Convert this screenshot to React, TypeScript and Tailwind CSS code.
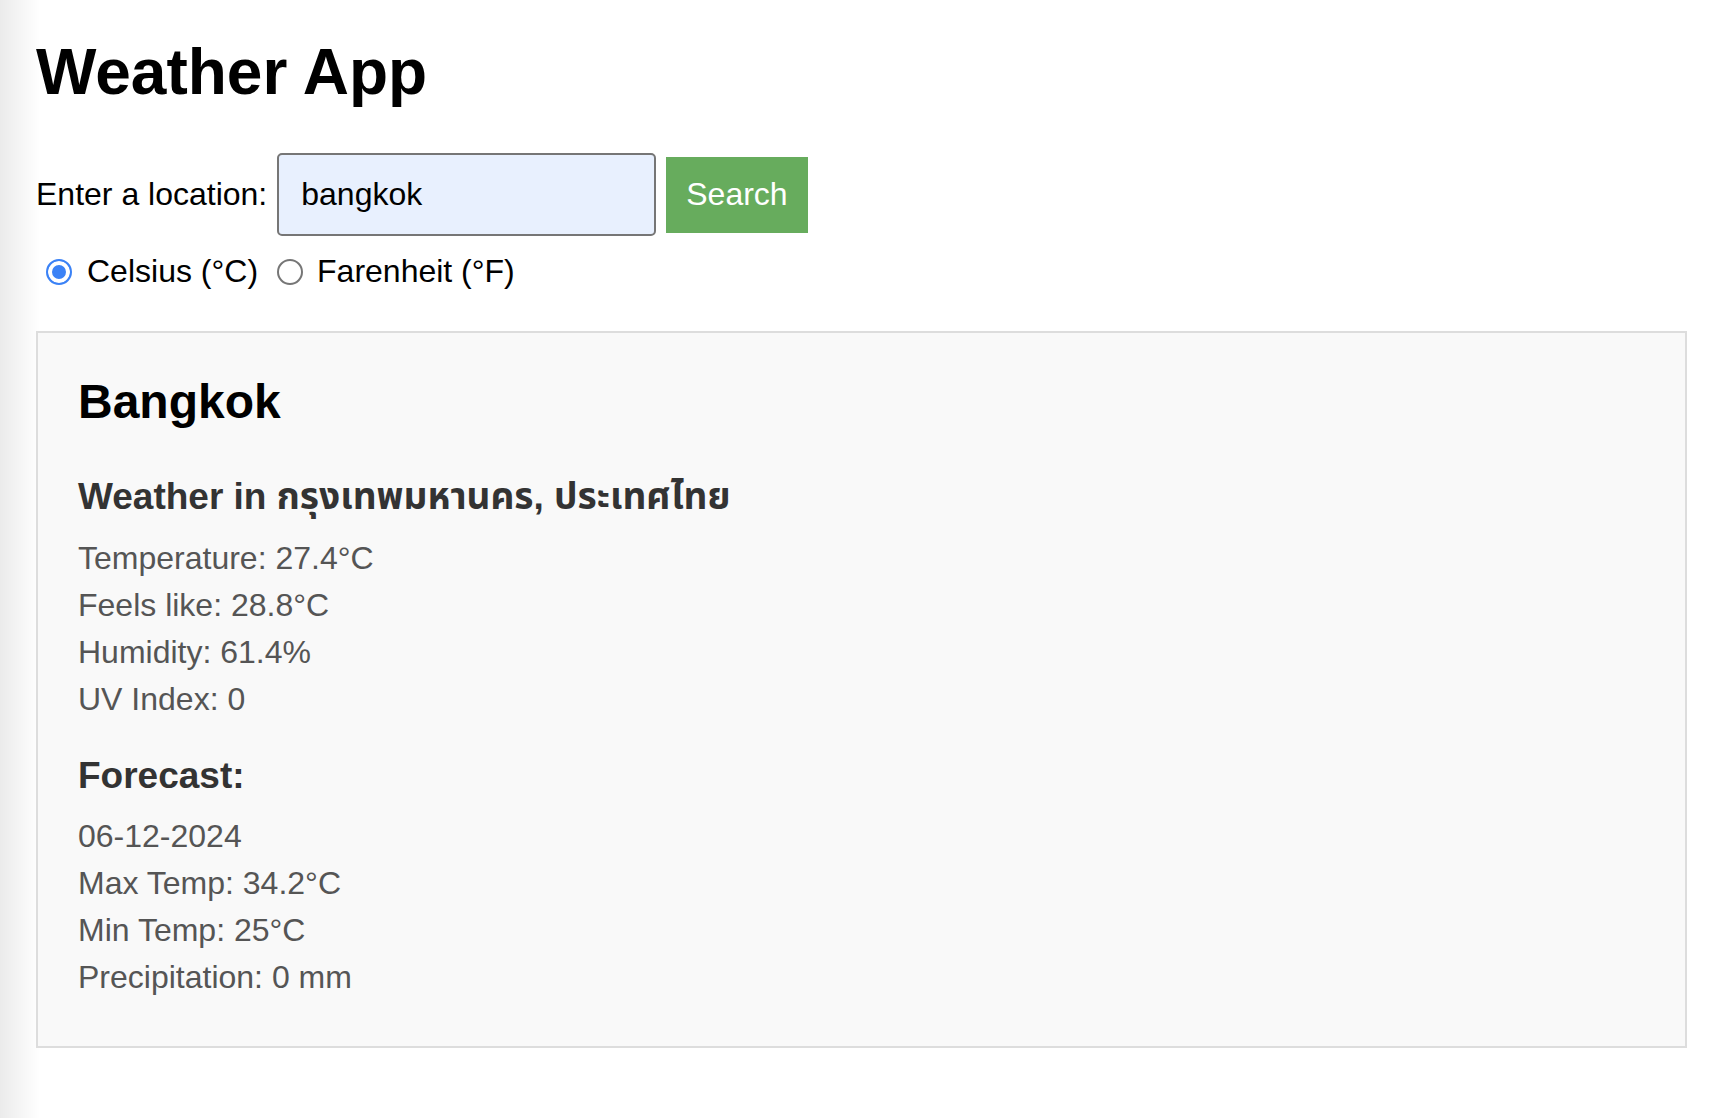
import { useState } from 'react';

const current = [
  'Temperature: 27.4°C',
  'Feels like: 28.8°C',
  'Humidity: 61.4%',
  'UV Index: 0',
];

const forecast = [
  '06-12-2024',
  'Max Temp: 34.2°C',
  'Min Temp: 25°C',
  'Precipitation: 0 mm',
];

export default function App() {
  const [location, setLocation] = useState('bangkok');
  const [unit, setUnit] = useState<'c' | 'f'>('c');

  return (
    <div className="min-h-screen bg-[linear-gradient(to_right,#ebebeb,#ffffff_40px)] font-['Liberation_Sans','Noto_Sans_Thai','Noto_Sans',sans-serif] text-black">
      <div className="pl-[36px] pr-[41px] pt-[35px]">
        <h1 className="text-[64px] leading-[74px] font-bold">Weather App</h1>

        {/* Search */}
        <form className="mt-[44px] flex items-center h-[83px]" onSubmit={(e) => e.preventDefault()}>
          <label htmlFor="loc" className="text-[32px] leading-[37px]">
            Enter a location:
          </label>
          <input
            id="loc"
            value={location}
            onChange={(e) => setLocation(e.target.value)}
            className="ml-[10px] w-[379px] h-[83px] px-[22px] text-[32px] bg-[#e8f0fe] border-2 border-[#767676] rounded-[5px] outline-none"
          />
          <button
            type="submit"
            className="ml-[10px] h-[76px] px-[20px] text-[32px] leading-[37px] text-white bg-[#67ac5d]"
          >
            Search
          </button>
        </form>

        {/* Units */}
        <div className="mt-[17px] h-[37px] flex items-center text-[32px] leading-[37px]">
          <input
            type="radio"
            name="unit"
            checked={unit === 'c'}
            onChange={() => setUnit('c')}
            className="ml-[10px] w-[26px] h-[26px] appearance-none rounded-full border-2 border-[#767676] bg-white checked:border-[#3b82f6] checked:bg-[#3b82f6] checked:shadow-[inset_0_0_0_4px_#ffffff]"
          />
          <span className="ml-[15px]">Celsius (°C)</span>
          <input
            type="radio"
            name="unit"
            checked={unit === 'f'}
            onChange={() => setUnit('f')}
            className="ml-[19px] w-[26px] h-[26px] appearance-none rounded-full border-2 border-[#767676] bg-white checked:border-[#3b82f6] checked:bg-[#3b82f6] checked:shadow-[inset_0_0_0_4px_#ffffff]"
          />
          <span className="ml-[14px]">Farenheit (°F)</span>
        </div>

        {/* Result */}
        <div className="mt-[41px] border-2 border-[#dddddd] bg-[#f9f9f9] px-[40px] pt-[40px] pb-[45px]">
          <h2 className="text-[48px] leading-[58px] font-bold">Bangkok</h2>
          <h3 className="mt-[44px] text-[37px] leading-[44px] font-bold text-[#333333]">
            Weather in กรุงเทพมหานคร, ประเทศไทย
          </h3>
          <div className="mt-[16px] text-[32px] leading-[47px] text-[#555555]">
            {current.map((line) => (
              <p key={line}>{line}</p>
            ))}
          </div>
          <h3 className="mt-[31px] text-[37px] leading-[44px] font-bold text-[#333333]">Forecast:</h3>
          <div className="mt-[15px] text-[32px] leading-[47px] text-[#555555]">
            {forecast.map((line) => (
              <p key={line}>{line}</p>
            ))}
          </div>
        </div>
      </div>
    </div>
  );
}
